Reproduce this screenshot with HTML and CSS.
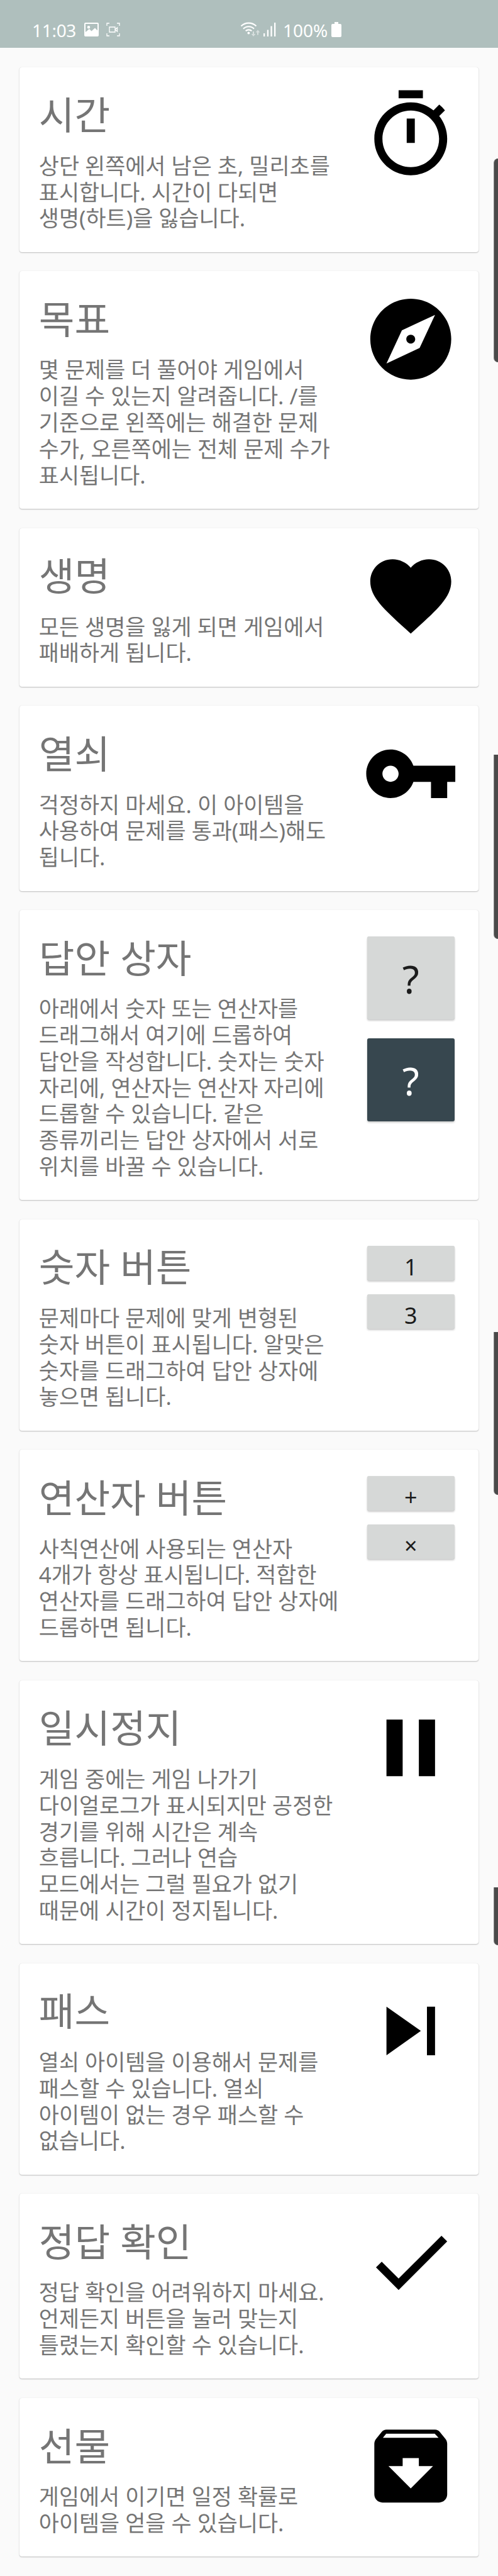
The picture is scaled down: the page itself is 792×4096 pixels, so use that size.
FILE: index.html
```html
<!DOCTYPE html>
<html lang="ko">
<head>
<meta charset="utf-8">
<title>도움말</title>
<link rel="stylesheet" href="styles.css">
</head>
<body>
<header class="status">
  <span class="clock">11:03</span>
  <svg class="i-pic" viewBox="0 0 23 22"><path fill="#fff" fill-rule="evenodd" d="M2 0h19a2 2 0 0 1 2 2v18a2 2 0 0 1-2 2H2a2 2 0 0 1-2-2V2a2 2 0 0 1 2-2zM2 2v13l6-5 3.500 3.500 5.500-5 4 4V2zM7 5a2.300 2.300 0 1 1 0 4.600A2.300 2.300 0 0 1 7 5z"/></svg>
  <svg class="i-rec" viewBox="0 0 22 22" fill="none" stroke="#fff" stroke-width="1.300"><path d="M1 5V1h4M17 1h4v4M21 17v4h-4M5 21H1v-4M5 7h9v8H5zM14 11l3.500-3v6z"/></svg>
  <svg class="i-wifi" viewBox="0 0 32 24"><g fill="none" stroke="#fff" stroke-width="2.200"><path d="M1.500 6.500a17 17 0 0 1 24 0M5 10.800a12 12 0 0 1 17 0M8.700 14.300a7 7 0 0 1 9.600 0"/></g><circle cx="13.400" cy="17.500" r="1.900" fill="#fff"/><path fill="#fff" opacity=".5" d="M20 15h2v4h2.300l-3.300 4-3.300-4H20zM27 20.500h2v-4h2.300L28 12.500l-3.300 4H27z"/></svg>
  <svg class="i-sig" viewBox="0 0 21 22" fill="#fff"><path d="M0 17h2.300v5H0zM5.800 11.500h2.300V22H5.800zM11.400 5.500h2.300V22h-2.300zM17 0h2.300v22H17z"/></svg>
  <span class="pct">100%</span>
  <svg class="i-bat" viewBox="0 0 16 24"><path fill="#fff" d="M5 0h6v3h3a2 2 0 0 1 2 2v17a2 2 0 0 1-2 2H2a2 2 0 0 1-2-2V5a2 2 0 0 1 2-2h3z"/></svg>
</header>
<main class="list">
  <section class="card">
    <div class="text"><h2>시간</h2><p>상단 왼쪽에서 남은 초, 밀리초를<br>표시합니다. 시간이 다되면<br>생명(하트)을 잃습니다.</p></div>
    <svg class="icon" viewBox="0 0 24 24"><path d="M15 1H9v2h6V1zm-4 13h2V8h-2v6zm8.030-6.610l1.420-1.420c-.43-.51-.9-.99-1.410-1.410l-1.420 1.420C16.070 4.740 14.120 4 12 4c-4.970 0-9 4.030-9 9s4.020 9 9 9 9-4.030 9-9c0-2.120-.74-4.070-1.970-5.610zM12 20c-3.870 0-7-3.130-7-7s3.130-7 7-7 7 3.130 7 7-3.130 7-7 7z"/></svg>
  </section>
  <section class="card">
    <div class="text"><h2>목표</h2><p>몇 문제를 더 풀어야 게임에서<br>이길 수 있는지 알려줍니다. /를<br>기준으로 왼쪽에는 해결한 문제<br>수가, 오른쪽에는 전체 문제 수가<br>표시됩니다.</p></div>
    <svg class="icon" viewBox="0 0 24 24"><path d="M12 10.900c-.61 0-1.100.49-1.100 1.100s.49 1.100 1.100 1.100c.61 0 1.100-.49 1.100-1.100s-.49-1.100-1.100-1.100zM12 2C6.480 2 2 6.480 2 12s4.480 10 10 10 10-4.480 10-10S17.520 2 12 2zm2.190 12.190L6 18l3.810-8.190L18 6l-3.810 8.190z"/></svg>
  </section>
  <section class="card">
    <div class="text"><h2>생명</h2><p>모든 생명을 잃게 되면 게임에서<br>패배하게 됩니다.</p></div>
    <svg class="icon" viewBox="0 0 24 24"><path d="M12 21.350l-1.450-1.320C5.400 15.360 2 12.280 2 8.500 2 5.420 4.420 3 7.500 3c1.740 0 3.410.81 4.500 2.090C13.090 3.810 14.760 3 16.500 3 19.580 3 22 5.420 22 8.500c0 3.780-3.400 6.860-8.550 11.540L12 21.350z"/></svg>
  </section>
  <section class="card">
    <div class="text"><h2>열쇠</h2><p>걱정하지 마세요. 이 아이템을<br>사용하여 문제를 통과(패스)해도<br>됩니다.</p></div>
    <svg class="icon" viewBox="0 0 24 24"><path d="M12.650 10C11.830 7.670 9.610 6 7 6c-3.310 0-6 2.690-6 6s2.690 6 6 6c2.610 0 4.830-1.670 5.650-4H17v4h4v-4h2v-4H12.650zM7 14c-1.100 0-2-.9-2-2s.9-2 2-2 2 .9 2 2-.9 2-2 2z"/></svg>
  </section>
  <section class="card">
    <div class="text"><h2>답안 상자</h2><p>아래에서 숫자 또는 연산자를<br>드래그해서 여기에 드롭하여<br>답안을 작성합니다. 숫자는 숫자<br>자리에, 연산자는 연산자 자리에<br>드롭할 수 있습니다. 같은<br>종류끼리는 답안 상자에서 서로<br>위치를 바꿀 수 있습니다.</p></div>
    <div class="boxes"><span class="box">?</span><span class="box dark">?</span></div>
  </section>
  <section class="card">
    <div class="text"><h2>숫자 버튼</h2><p>문제마다 문제에 맞게 변형된<br>숫자 버튼이 표시됩니다. 알맞은<br>숫자를 드래그하여 답안 상자에<br>놓으면 됩니다.</p></div>
    <div class="keys"><span class="key">1</span><span class="key">3</span></div>
  </section>
  <section class="card">
    <div class="text"><h2>연산자 버튼</h2><p>사칙연산에 사용되는 연산자<br>4개가 항상 표시됩니다. 적합한<br>연산자를 드래그하여 답안 상자에<br>드롭하면 됩니다.</p></div>
    <div class="keys"><span class="key">+</span><span class="key">×</span></div>
  </section>
  <section class="card">
    <div class="text"><h2>일시정지</h2><p>게임 중에는 게임 나가기<br>다이얼로그가 표시되지만 공정한<br>경기를 위해 시간은 계속<br>흐릅니다. 그러나 연습<br>모드에서는 그럴 필요가 없기<br>때문에 시간이 정지됩니다.</p></div>
    <svg class="icon" viewBox="0 0 24 24"><path d="M6 19h4V5H6v14zm8-14v14h4V5h-4z"/></svg>
  </section>
  <section class="card">
    <div class="text"><h2>패스</h2><p>열쇠 아이템을 이용해서 문제를<br>패스할 수 있습니다. 열쇠<br>아이템이 없는 경우 패스할 수<br>없습니다.</p></div>
    <svg class="icon" viewBox="0 0 24 24"><path d="M6 18l8.500-6L6 6v12zM16 6v12h2V6h-2z"/></svg>
  </section>
  <section class="card">
    <div class="text"><h2>정답 확인</h2><p>정답 확인을 어려워하지 마세요.<br>언제든지 버튼을 눌러 맞는지<br>틀렸는지 확인할 수 있습니다.</p></div>
    <svg class="icon" viewBox="0 0 24 24"><path d="M9 16.170L4.830 12l-1.420 1.410L9 19 21 7l-1.410-1.410z"/></svg>
  </section>
  <section class="card">
    <div class="text"><h2>선물</h2><p>게임에서 이기면 일정 확률로<br>아이템을 얻을 수 있습니다.</p></div>
    <svg class="icon" viewBox="0 0 24 24"><path d="M20.540 5.230l-1.390-1.680C18.880 3.210 18.470 3 18 3H6c-.47 0-.88.21-1.160.55L3.460 5.230C3.170 5.570 3 6.020 3 6.500V19c0 1.100.9 2 2 2h14c1.100 0 2-.9 2-2V6.500c0-.48-.17-.93-.46-1.270zM12 17.500L6.500 12H10v-2h4v2h3.500L12 17.500zM5.120 5l.81-1h12l.94 1H5.120z"/></svg>
  </section>
</main>
<i class="thumb t1"></i><i class="thumb t2"></i><i class="thumb t3"></i><i class="thumb t4"></i>
</body>
</html>
```
FILE: styles.css
```css
* { box-sizing: border-box; }
body {
  margin: 0;
  position: relative;
  width: 792px;
  height: 4096px;
  overflow: hidden;
  background: #fafafa;
  font-family: "Noto Sans", "Noto Sans CJK KR", sans-serif;
  color: #757575;
}
.status {
  display: flex;
  align-items: flex-start;
  height: 76px;
  padding: 34px 0 0 51px;
  background: #afbfbd;
  color: #fff;
  font-size: 28px;
  line-height: 28px;
  white-space: nowrap;
}
.status svg { display: block; flex: none; }
.clock { width: 83px; letter-spacing: -0.3px; }
.i-pic { width: 23px; height: 22px; margin-top: 2px; }
.i-rec { width: 22px; height: 22px; margin: 2px 0 0 12px; }
.i-wifi { width: 32px; height: 24px; margin: 1px 0 0 191px; }
.i-sig { width: 21px; height: 22px; margin: 2px 0 0 5px; }
.pct { width: 77px; margin-left: 10px; }
.i-bat { width: 16px; height: 24px; margin-top: 1px; }
.list {
  display: flex;
  flex-direction: column;
  gap: 30.65px;
  padding: 30.7px 30.8px 0;
}
.card {
  display: flex;
  justify-content: space-between;
  align-items: flex-start;
  padding: 30.5px 31px 32.6px;
  background: #fff;
  border-radius: 4px;
  box-shadow: 0 1px 2px rgba(0, 0, 0, 0.24), 0 0 1px rgba(0, 0, 0, 0.12);
}
.text { white-space: nowrap; }
h2 {
  margin: 0;
  height: 105.6px;
  font-size: 61.6px;
  line-height: 91px;
  font-weight: 400;
}
p {
  margin: 0;
  font-size: 34.9px;
  line-height: 41.78px;
}
.icon {
  flex: none;
  width: 154.5px;
  height: 154.5px;
  margin-bottom: -60px;
  fill: #000;
}
.boxes, .keys {
  display: flex;
  flex-direction: column;
  gap: 29.6px;
  width: 139.4px;
  margin: 11.4px 7.2px 0 0;
  color: #1c1c1c;
  text-align: center;
}
.box, .key {
  background: #d6d8d7;
  border-radius: 3px;
  box-shadow: 0 2px 3px rgba(0, 0, 0, 0.2), 0 0 1px rgba(0, 0, 0, 0.15);
}
.box { height: 132.3px; font-size: 62px; line-height: 134px; }
.dark { background: #37474f; color: #fff; }
.keys { gap: 21.9px; }
.key { height: 55.1px; padding-top: 12px; font-size: 36px; line-height: 43px; }
.thumb {
  position: absolute;
  right: 0;
  width: 7.5px;
  background: #4a4a4a;
  border-left: 1px solid #858585;
  border-radius: 0 0 0 8px;
}
.t1 { top: 252px; height: 324px; border-radius: 8px 0 0 8px; }
.t2 { top: 1200px; height: 293px; }
.t3 { top: 2118px; height: 259px; }
.t4 { top: 3001px; height: 92px; }
```
